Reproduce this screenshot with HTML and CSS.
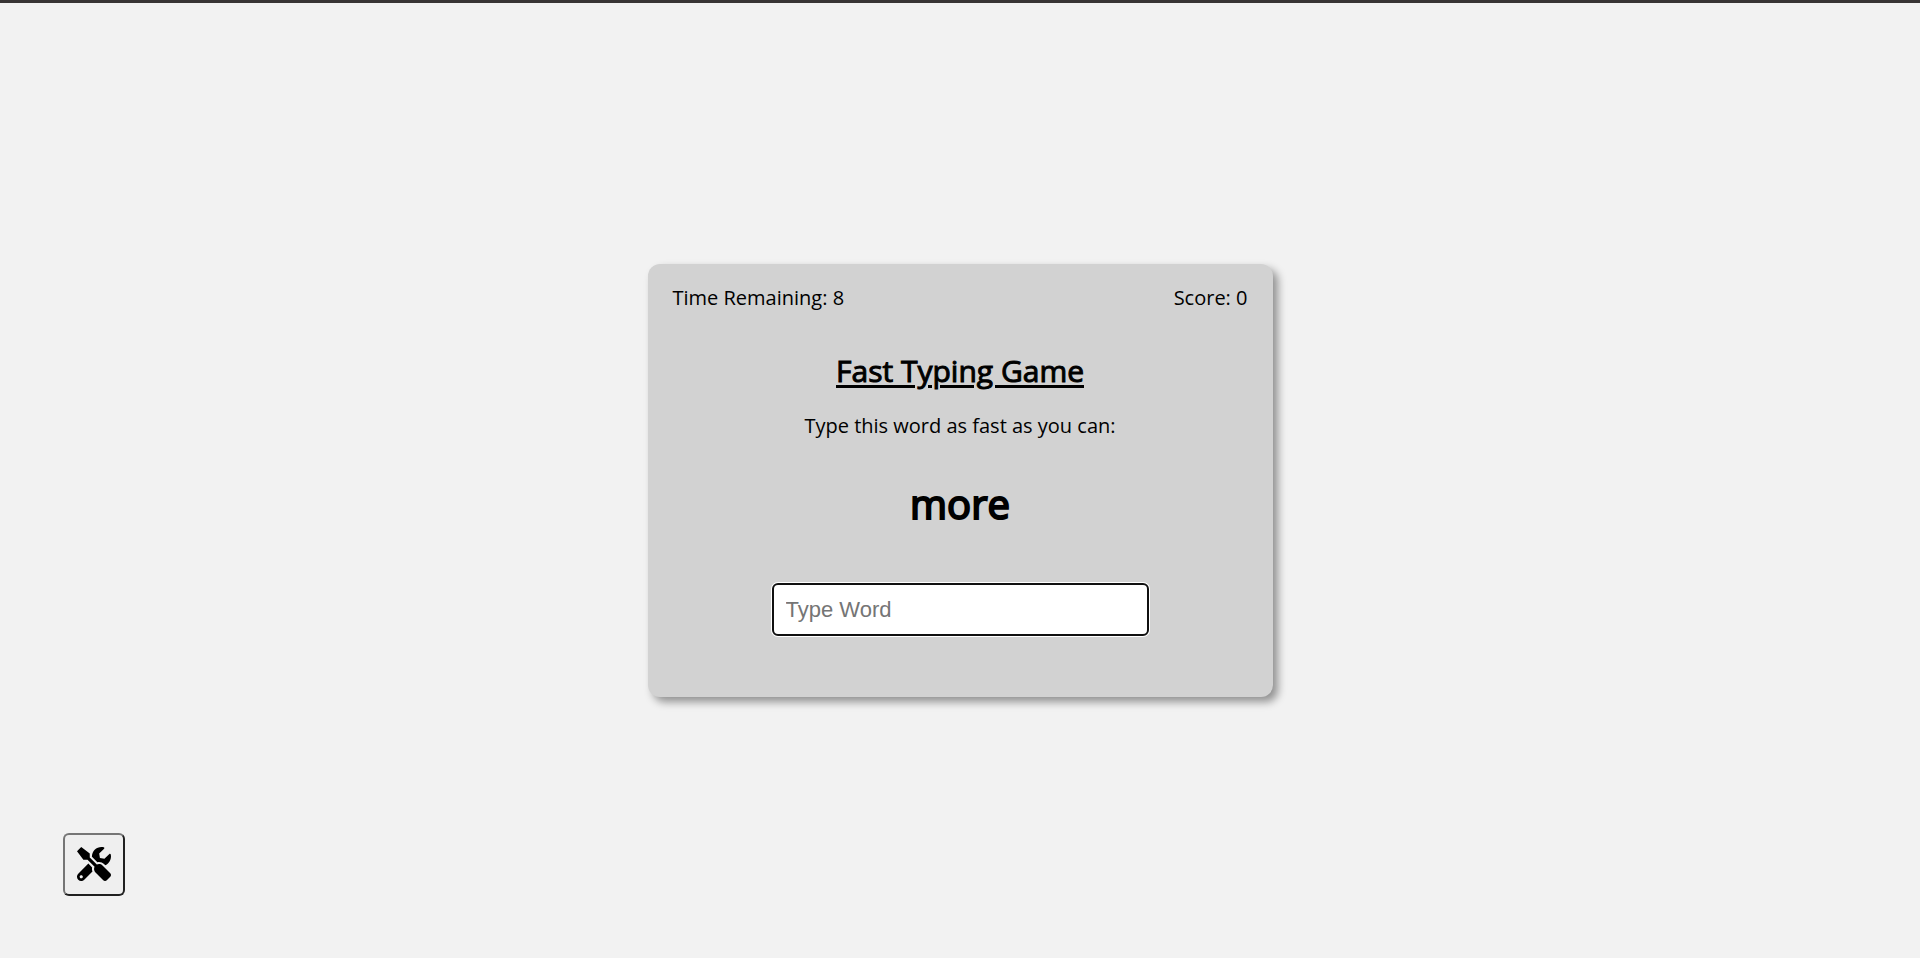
FILE: index.html
```html
<!DOCTYPE html>
<html lang="en">
<head>
<meta charset="utf-8">
<title>Fast Typing Game</title>
<link rel="stylesheet" href="styles.css">
</head>
<body>
<button class="settings" type="button" aria-label="Settings">
<svg class="settings-icon" viewBox="0 0 512 512" aria-hidden="true">
<path d="M501.1 395.7L384 278.6c-23.1-23.1-57.6-27.6-85.4-13.9L192 158.1V96L64 0 0 64l96 128h62.1l106.6 106.6c-13.6 27.8-9.2 62.3 13.9 85.4l117.1 117.1c14.6 14.6 38.2 14.6 52.7 0l52.7-52.7c14.5-14.6 14.5-38.2 0-52.7zM331.7 225c28.3 0 54.9 11 74.9 31l19.4 19.4c15.8-6.9 30.8-16.5 43.8-29.5 37.1-37.1 49.7-89.3 37.9-136.7-2.2-9-13.5-12.1-20.1-5.5l-74.4 74.4-67.9-11.3L334 98.9l74.4-74.4c6.6-6.6 3.4-17.9-5.7-20.2-47.4-11.7-99.6.9-136.6 37.9-28.5 28.5-41.9 66.1-41.2 103.6l82.1 82.1c8.1-1.9 16.5-2.9 24.7-2.9zm-103.9 82l-56.7-56.7L18.7 402.8c-25 25-25 65.5 0 90.5s65.5 25 90.5 0l123.6-123.6c-7.6-19.9-9.9-41.6-5-62.7zM64 472c-13.2 0-24-10.8-24-24 0-13.3 10.7-24 24-24s24 10.7 24 24c0 13.2-10.7 24-24 24z"/>
</svg>
</button>
<main class="card">
<div class="stats"><span>Time Remaining: 8</span><span>Score: 0</span></div>
<h1 class="title">Fast Typing Game</h1>
<label class="hint" for="word-input">Type this word as fast as you can:</label>
<p class="word">more</p>
<input class="word-input" id="word-input" type="text" placeholder="Type Word" autocomplete="off">
</main>
</body>
</html>
```
FILE: styles.css
```css
* { box-sizing: border-box; }

body {
  margin: 0;
  min-height: 100vh;
  display: flex;
  align-items: center;
  justify-content: center;
  border-top: 3px solid #383434;
  background: #f2f2f2;
  color: #000;
  font: 20px/28px "Open Sans", sans-serif;
}

.settings {
  position: fixed;
  left: 63px;
  bottom: 62px;
  display: flex;
  padding: 12px 12px 13px;
  border: 2px solid;
  border-color: #767676 #212121 #212121 #767676;
  border-radius: 6px;
  background: #efefef;
}

.settings-icon { width: 34px; height: 34px; }

.card {
  display: flex;
  flex-direction: column;
  align-items: center;
  width: 625px;
  max-width: 100%;
  padding: 20px 25px 61px;
  border-radius: 12px;
  background: #d2d2d2;
  box-shadow: 5px 5px 8px rgba(0, 0, 0, 0.4);
}

.stats {
  display: flex;
  justify-content: space-between;
  width: 100%;
}

.title {
  margin: 38px 0 20px;
  font-size: 30px;
  line-height: 42px;
  font-weight: 400;
  text-decoration: underline;
  text-decoration-thickness: 3px;
  text-underline-offset: 3px;
  -webkit-text-stroke: 1px #000;
}

.word {
  margin: 36px 0 51px;
  font-size: 40px;
  line-height: 56px;
  -webkit-text-stroke: 2px #000;
}

.word-input {
  width: 377px;
  max-width: 100%;
  height: 53px;
  padding: 0 12px;
  border: 2px solid #101010;
  border-radius: 6px;
  background: #fff;
  box-shadow: 0 0 0 1px #fff;
  font: 22px "Liberation Sans", Arial, sans-serif;
}

.word-input::placeholder { color: #757575; }
```
